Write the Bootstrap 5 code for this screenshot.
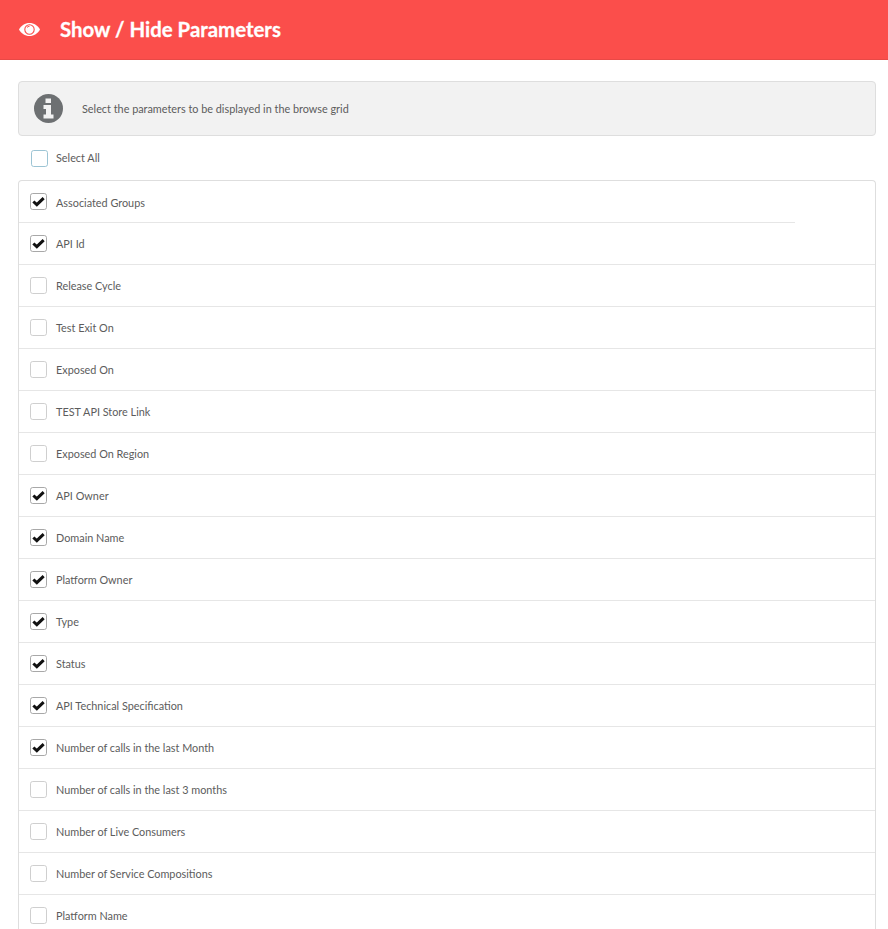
<!DOCTYPE html>
<html lang="en">
<head>
    <meta charset="UTF-8">
    <title>Show / Hide Parameters</title>
    <link href="https://cdn.jsdelivr.net/npm/bootstrap@5.3.0/dist/css/bootstrap.min.css" rel="stylesheet">
    <style>
        html, body { height: 929px; overflow: hidden; }
        body { font-family: Lato, "Liberation Sans", sans-serif; font-size: 10.85px; color: #5c5c5c; background: #fff; }
        .panel-head { height: 60px; background: #fb4e4b; color: #fff; padding-left: 19px; border-bottom: 1px solid #e84946; }
        .panel-head svg { width: 21px; height: 13px; margin-right: 20px; }
        .panel-head h1 { font-family: Lato, "Liberation Sans", sans-serif; font-size: 20.4px; font-weight: 700; margin: 0 0 1px; -webkit-text-stroke: 0.3px #fff; }
        .panel-body { padding: 21px 12px 0 18px; }
        .hint-box { height: 55px; background: #f2f2f2; border: 1px solid #dedede; border-radius: 4px; padding-left: 15px; margin-bottom: 13px; }
        .hint-box svg { width: 29px; height: 29px; margin-right: 19px; }
        .hint-box span { color: #5c5c5c; margin-top: 2px; }
        .pick { width: 17px; height: 17px; margin: 0 9px 0 0; flex: none; border: 1px solid #cfcfcf; border-radius: 3px; background-color: #fff; }
        .pick:checked { background-color: #fff; border-color: #a8a8a8; background-size: 15px 15px; background-position: center;
            background-image: url("data:image/svg+xml,%3csvg xmlns='http://www.w3.org/2000/svg' viewBox='0 0 16 16'%3e%3cpath fill='none' stroke='%23111' stroke-width='3.200' d='M2.500 8l3.700 3.400L13.500 4.400'/%3e%3c/svg%3e"); }
        .pick:focus { box-shadow: none; border-color: #cfcfcf; }
        .pick-all { border-color: #9cc4d4; }
        .all-row { height: 18px; padding-left: 13px; margin-bottom: 13px; }
        .all-row .pick { margin-right: 8px; }
        .param-list { border: 1px solid #dedede; border-radius: 4px 4px 0 0; border-bottom: 0; }
        .param-row { height: 42px; padding: 0 0 0 11px; border-bottom: 1px solid #e6e6e6; }
        .param-row label { margin-top: 2px; }
        .param-row.first-row { border-bottom: 0; position: relative; }
        .param-row.first-row .form-check-input { margin-top: -2px; }
        .param-row.first-row::after { content: ""; position: absolute; left: 0; bottom: 0; width: 776px; height: 1px; background: #e6e6e6; }
    </style>
</head>
<body>
<div class="panel-head d-flex align-items-center">
    <svg viewBox="0 0 21 13">
        <path fill="#fff" d="M10.500 0C15 0 18.800 2.600 21 6.500 18.800 10.400 15 13 10.500 13S2.200 10.400 0 6.500C2.200 2.600 6 0 10.500 0z"/>
        <circle cx="10.500" cy="6.500" r="4.700" fill="none" stroke="#fb4e4b" stroke-width="1.100"/>
        <path fill="none" stroke="#fb4e4b" stroke-width="1" d="M8 4.500a3 3 0 0 1 2.500-1.200"/>
    </svg>
    <h1>Show / Hide Parameters</h1>
</div>

<div class="panel-body">
    <div class="hint-box d-flex align-items-center">
        <svg viewBox="0 0 29 29"><circle cx="14.500" cy="14.500" r="14.500" fill="#6d7072"/><path fill="#f2f2f2" d="M11.500 4.500h5.500v4.500h-5.500zM9.500 11h7.500v9.500h2.500v4h-10v-4h2.500v-5.500h-2.500z"/></svg>
        <span>Select the parameters to be displayed in the browse grid</span>
    </div>

    <div class="all-row d-flex align-items-center">
        <input class="form-check-input pick pick-all" type="checkbox" id="selectAll">
        <label for="selectAll">Select All</label>
    </div>

    <div class="param-list" id="lista"></div>
</div>

<script>
    const parametros = [
        ["Associated Groups", true],
        ["API Id", true],
        ["Release Cycle", false],
        ["Test Exit On", false],
        ["Exposed On", false],
        ["TEST API Store Link", false],
        ["Exposed On Region", false],
        ["API Owner", true],
        ["Domain Name", true],
        ["Platform Owner", true],
        ["Type", true],
        ["Status", true],
        ["API Technical Specification", true],
        ["Number of calls in the last Month", true],
        ["Number of calls in the last 3 months", false],
        ["Number of Live Consumers", false],
        ["Number of Service Compositions", false],
        ["Platform Name", false]
    ];

    const lista = document.getElementById("lista");
    parametros.forEach(([nombre, marcado], i) => {
        const fila = document.createElement("div");
        fila.className = "param-row d-flex align-items-center" + (i === 0 ? " first-row" : "");
        fila.innerHTML = `<input class="form-check-input pick" type="checkbox" id="p${i}" ${marcado ? "checked" : ""}>
            <label for="p${i}">${nombre}</label>`;
        lista.appendChild(fila);
    });
</script>
<script src="https://cdn.jsdelivr.net/npm/bootstrap@5.3.0/dist/js/bootstrap.bundle.min.js"></script>
</body>
</html>
